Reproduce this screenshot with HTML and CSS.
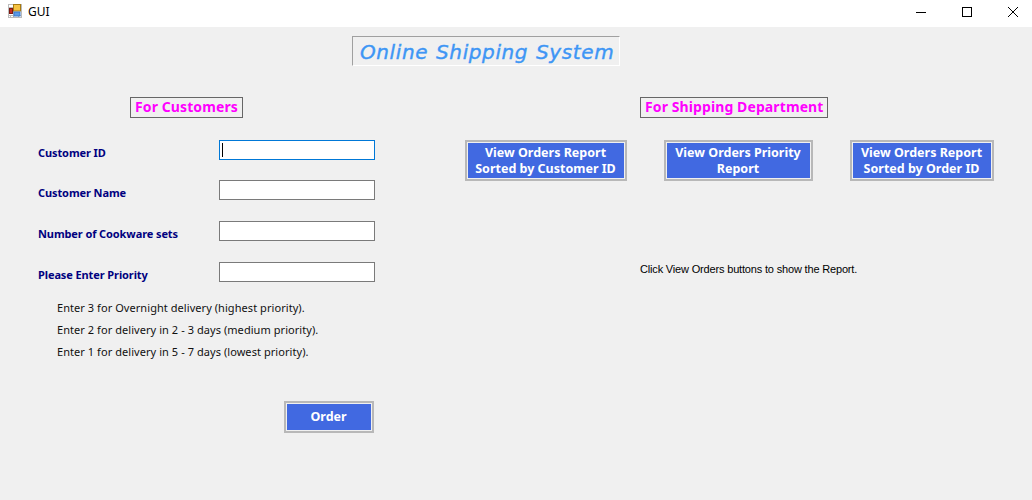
FILE: index.html
```html
<!DOCTYPE html>
<html>
<head>
    <title>GUI</title>
    <link rel="stylesheet" href="styles.css">
</head>
<body>
    <div class="titlebar">
        <svg class="app-icon" width="14" height="14" viewBox="0 0 14 14">
            <rect x="0.5" y="0.5" width="13" height="13" fill="#fff" stroke="#bbb"/>
            <path d="M0 3.5h6M0 11.5h14M5.500 0v14M2.500 11v3M10.500 11v3" stroke="#bbb" fill="none"/>
            <rect x="5.500" y="0.500" width="7" height="6.500" fill="#f5c242" stroke="#a87a10"/>
            <rect x="1.500" y="4.500" width="3" height="5" fill="#c92a1e" stroke="#7d1a12"/>
            <rect x="6" y="8" width="6" height="4" fill="#5b9be8" stroke="#3a78cc"/>
        </svg>
        <span class="app-name">GUI</span>
        <div class="window-buttons">
            <svg width="12" height="12" viewBox="0 0 12 12"><path d="M1 6.500h10" stroke="#000"/></svg>
            <svg width="12" height="12" viewBox="0 0 12 12"><rect x="1.500" y="1.500" width="9" height="9" fill="none" stroke="#000"/></svg>
            <svg width="12" height="12" viewBox="0 0 12 12"><path d="M1 1l10 10M11 1L1 11" stroke="#000"/></svg>
        </div>
    </div>

    <div class="form">
        <div class="title-row">
            <h1 class="title">Online Shipping System</h1>
        </div>
        <div class="columns">
            <div class="customers">
                <div class="heading-row customers-heading">
                    <span class="heading">For Customers</span>
                </div>
                <div class="field first">
                    <label>Customer ID</label>
                    <div class="textbox focused"><span class="caret"></span></div>
                </div>
                <div class="field">
                    <label>Customer Name</label>
                    <div class="textbox"></div>
                </div>
                <div class="field third">
                    <label>Number of Cookware sets</label>
                    <div class="textbox"></div>
                </div>
                <div class="field third">
                    <label>Please Enter Priority</label>
                    <div class="textbox"></div>
                </div>
                <div class="hints">
                    <p>Enter 3 for Overnight delivery (highest priority).</p>
                    <p>Enter 2 for delivery in 2 - 3 days (medium priority).</p>
                    <p>Enter 1 for delivery in 5 - 7 days (lowest priority).</p>
                </div>
                <div class="order-row">
                    <button class="button order">Order</button>
                </div>
            </div>
            <div class="shipping">
                <div class="heading-row">
                    <span class="heading">For Shipping Department</span>
                </div>
                <div class="report-buttons">
                    <button class="button by-customer">View Orders Report<br>Sorted by Customer ID</button>
                    <button class="button by-priority">View Orders Priority<br>Report</button>
                    <button class="button by-order">View Orders Report<br>Sorted by Order ID</button>
                </div>
                <p class="note">Click View Orders buttons to show the Report.</p>
            </div>
        </div>
    </div>
</body>
</html>
```

FILE: styles.css
```css
* {
    box-sizing: border-box;
}
html, body {
    margin: 0;
    height: 100%;
}
body {
    background-color: #f0f0f0;
    font-family: "Noto Sans", sans-serif;
    overflow: hidden;
}
p {
    margin: 0;
}

.titlebar {
    display: flex;
    align-items: center;
    height: 27px;
    padding-left: 8px;
    background-color: #fff;
}
.app-icon {
    margin-bottom: 5px;
}
.app-name {
    margin-left: 6px;
    margin-bottom: 4px;
    font-size: 12px;
    color: #000;
}
.window-buttons {
    display: flex;
    gap: 34px;
    margin-left: auto;
    padding-right: 13px;
    margin-bottom: 4px;
}

.form {
    padding-top: 9px;
}
.title-row {
    padding-left: 352px;
}
.title {
    width: 268px;
    height: 30px;
    margin: 0;
    border-top: 1px solid #a0a0a0;
    border-left: 1px solid #a0a0a0;
    border-right: 1px solid #fff;
    border-bottom: 1px solid #fff;
    padding-left: 7px;
    font-family: "DejaVu Sans", sans-serif;
    font-size: 20px;
    font-style: italic;
    font-weight: normal;
    line-height: 30px;
    letter-spacing: 0.6px;
    word-spacing: 1px;
    white-space: nowrap;
    color: #3e96f5;
    -webkit-text-stroke: 0.4px #3e96f5;
}

.columns {
    display: flex;
    padding-top: 31px;
}
.customers {
    width: 640px;
    padding-left: 38px;
}
.shipping {
    flex: 1;
}

.heading-row {
    display: flex;
}
.customers-heading {
    padding-left: 92px;
}
.heading {
    height: 21px;
    padding: 0 4px;
    border: 1px solid #666;
    font-size: 14px;
    font-weight: 700;
    line-height: 18px;
    letter-spacing: 0.1px;
    color: #ff00ff;
    white-space: nowrap;
}

.field {
    display: flex;
    align-items: center;
    width: 337px;
    height: 20px;
    margin-top: 20px;
}
.field.first {
    margin-top: 22px;
}
.field.third {
    margin-top: 21px;
}
.field label {
    width: 181px;
    padding-top: 5px;
    font-size: 11px;
    font-weight: 700;
    letter-spacing: -0.1px;
    color: #00007f;
    white-space: nowrap;
}
.textbox {
    display: flex;
    align-items: center;
    width: 156px;
    height: 20px;
    padding-left: 2px;
    background-color: #fff;
    border: 1px solid #7a7a7a;
}
.textbox.focused {
    border-color: #0078d7;
}
.caret {
    width: 1px;
    height: 14px;
    background-color: #000;
}

.hints {
    display: flex;
    flex-direction: column;
    gap: 5px;
    margin-top: 17px;
    padding-left: 19px;
}
.hints p {
    height: 17px;
    font-size: 11px;
    line-height: 17px;
    letter-spacing: 0.06px;
    color: #111;
    white-space: nowrap;
}

.order-row {
    padding-left: 246px;
    padding-top: 41px;
}
.button {
    display: block;
    padding: 0 1px 0 0;
    border: 3px solid #f0f0f0;
    outline: 2px solid #b8b8b8;
    outline-offset: -2px;
    background-color: #4169e1;
    background-clip: padding-box;
    font-family: "Noto Sans", sans-serif;
    font-size: 12.5px;
    font-weight: 700;
    line-height: 16px;
    color: #fff;
    white-space: nowrap;
}
.order {
    width: 90px;
    height: 32px;
}
.report-buttons {
    display: flex;
    padding-top: 22px;
    margin-left: -175px;
}
.by-customer {
    width: 162px;
    height: 41px;
}
.by-priority {
    width: 149px;
    height: 41px;
    margin-left: 37px;
}
.by-order {
    width: 144px;
    height: 41px;
    margin-left: 37px;
}
.note {
    margin-top: 82px;
    font-family: "Liberation Sans", sans-serif;
    font-size: 11px;
    letter-spacing: -0.17px;
    color: #000;
}
```
